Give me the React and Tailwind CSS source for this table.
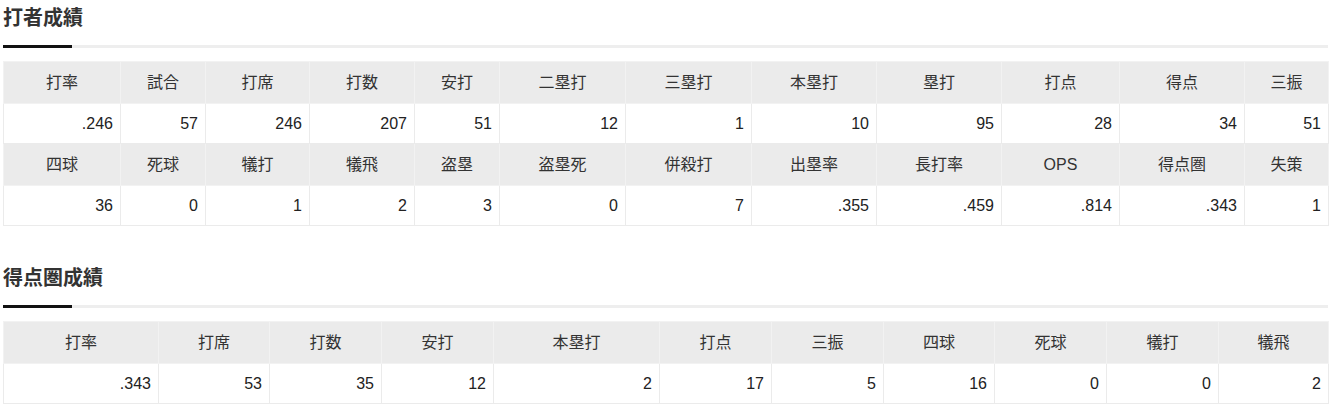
import React from 'react';

const batting = {
  widths: [117, 85, 104, 105, 85, 126, 126, 125, 125, 118, 125, 84],
  rows: [
    {
      head: ['打率', '試合', '打席', '打数', '安打', '二塁打', '三塁打', '本塁打', '塁打', '打点', '得点', '三振'],
      data: ['.246', '57', '246', '207', '51', '12', '1', '10', '95', '28', '34', '51'],
    },
    {
      head: ['四球', '死球', '犠打', '犠飛', '盗塁', '盗塁死', '併殺打', '出塁率', '長打率', 'OPS', '得点圏', '失策'],
      data: ['36', '0', '1', '2', '3', '0', '7', '.355', '.459', '.814', '.343', '1'],
    },
  ],
};

const scoring = {
  widths: [155, 111, 112, 112, 166, 112, 112, 111, 112, 112, 110],
  rows: [
    {
      head: ['打率', '打席', '打数', '安打', '本塁打', '打点', '三振', '四球', '死球', '犠打', '犠飛'],
      data: ['.343', '53', '35', '12', '2', '17', '5', '16', '0', '0', '2'],
    },
  ],
};

function SectionTitle({ children }) {
  return (
    <div>
      <h2 className="text-[20px] font-bold leading-[37px] text-[#333] mb-[8px]">{children}</h2>
      <div className="flex h-[3px]">
        <div className="w-[69px] bg-[#111]" />
        <div className="flex-1 bg-[#eeeeee]" />
      </div>
    </div>
  );
}

function StatsTable({ table }) {
  return (
    <table className="w-[1325px] table-fixed border-collapse border border-[#dcdcdc] mt-[13px]">
      <colgroup>
        {table.widths.map((w, i) => (
          <col key={i} style={{ width: w }} />
        ))}
      </colgroup>
      <tbody>
        {table.rows.map((r, i) => (
          <React.Fragment key={i}>
            <tr className="h-[42px] bg-[#ebebeb]">
              {r.head.map((h) => (
                <th key={h} className="border border-[#f2f2f2] font-normal text-center text-[#333] px-[6px]">
                  {h}
                </th>
              ))}
            </tr>
            <tr className="h-[40px] bg-white">
              {r.data.map((d, j) => (
                <td key={j} className="border border-[#ebebeb] text-right text-[#222] pr-[7px]">
                  {d}
                </td>
              ))}
            </tr>
          </React.Fragment>
        ))}
      </tbody>
    </table>
  );
}

export default function App() {
  return (
    <div
      className="bg-white w-[1338px] min-h-[416px] pl-[3px] text-[16px]"
      style={{ fontFamily: '"Liberation Sans", "Noto Sans CJK JP", sans-serif' }}
    >
      <div className="w-[1325px]">
        <SectionTitle>打者成績</SectionTitle>
        <StatsTable table={batting} />
        <div className="mt-[34px]">
          <SectionTitle>得点圏成績</SectionTitle>
          <StatsTable table={scoring} />
        </div>
      </div>
    </div>
  );
}
